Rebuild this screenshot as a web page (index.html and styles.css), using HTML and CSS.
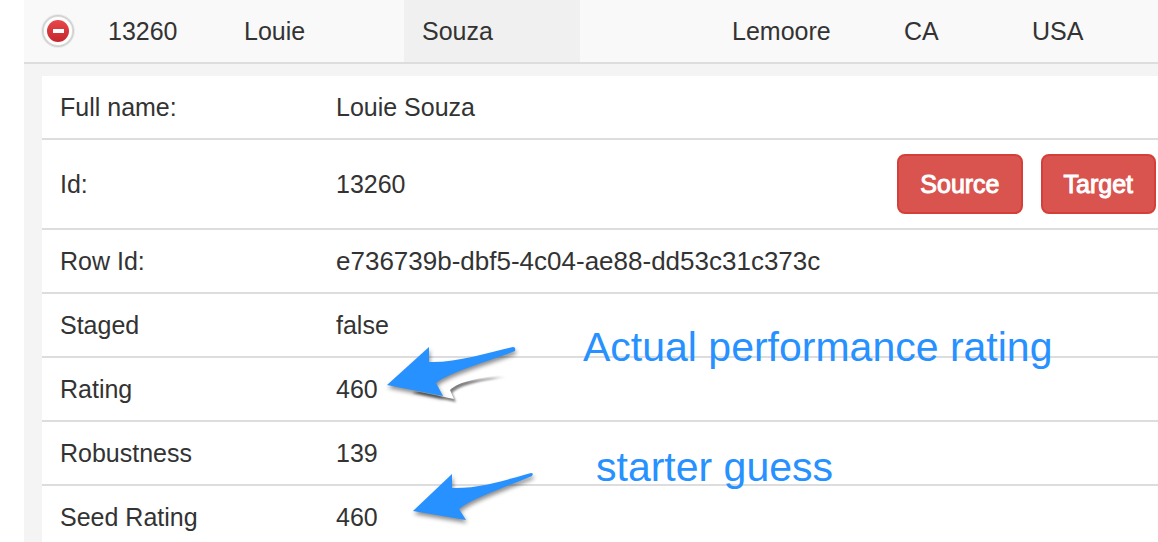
FILE: index.html
```html
<!DOCTYPE html>
<html lang="en">
<head>
    <meta charset="UTF-8">
    <meta name="viewport" content="width=device-width, initial-scale=1.0">
    <title>Player 13260</title>
    <link rel="stylesheet" href="styles.css">
</head>
<body>
    <main class="players">
        <!-- Expanded player row -->
        <table class="player-row">
            <tr>
                <td class="col-toggle">
                    <button class="toggle" aria-label="Hide details">
                        <svg width="36" height="36" viewBox="0 0 36 36">
                            <defs>
                                <linearGradient id="red" x1="0" y1="0" x2="0" y2="1">
                                    <stop offset="0" stop-color="#e8474b"/>
                                    <stop offset="1" stop-color="#c4262c"/>
                                </linearGradient>
                            </defs>
                            <circle cx="18" cy="18" r="17" fill="#ececec"/>
                            <circle cx="18" cy="18" r="16" fill="#cfcfcf"/>
                            <circle cx="18" cy="18" r="15" fill="#dcdcdc"/>
                            <circle cx="18" cy="18" r="14" fill="#fff"/>
                            <circle cx="18" cy="18" r="11" fill="url(#red)"/>
                            <rect x="13" y="16" width="11" height="4" fill="#fff"/>
                        </svg>
                    </button>
                </td>
                <td class="col-id">13260</td>
                <td class="col-first">Louie</td>
                <td class="col-last sorted">Souza</td>
                <td class="col-club"></td>
                <td class="col-city">Lemoore</td>
                <td class="col-state">CA</td>
                <td>USA</td>
            </tr>
        </table>

        <!-- Player details -->
        <div class="details">
            <table class="details-table">
                <tr>
                    <th scope="row">Full name:</th>
                    <td colspan="2">Louie Souza</td>
                </tr>
                <tr class="id-row">
                    <th scope="row">Id:</th>
                    <td>13260</td>
                    <td class="actions-cell">
                        <div class="actions">
                            <button class="btn-danger">Source</button>
                            <button class="btn-danger">Target</button>
                        </div>
                    </td>
                </tr>
                <tr>
                    <th scope="row">Row Id:</th>
                    <td class="row-id" colspan="2">e736739b-dbf5-4c04-ae88-dd53c31c373c</td>
                </tr>
                <tr>
                    <th scope="row">Staged</th>
                    <td colspan="2">false</td>
                </tr>
                <tr>
                    <th scope="row">Rating</th>
                    <td colspan="2">460</td>
                </tr>
                <tr>
                    <th scope="row">Robustness</th>
                    <td colspan="2">139</td>
                </tr>
                <tr>
                    <th scope="row">Seed Rating</th>
                    <td colspan="2">460</td>
                </tr>
            </table>
        </div>

        <!-- Notes drawn over the table -->
        <svg class="arrow arrow-rating" width="150" height="80" viewBox="0 0 150 80">
            <path class="arrow-ghost" d="M30 50 L74 59 L70 50 C78 42 100 37 124 34 C104 35 80 38 62 42 Z"/>
            <path class="arrow-shape" d="M7 45 L49 7 L49 22 C75 23 107 13 133 7 Q136 7 135 11 C110 21 72 31 56 43 L63 56 Z"/>
        </svg>
        <p class="note note-rating">Actual performance rating</p>

        <svg class="arrow arrow-seed" width="150" height="80" viewBox="0 0 150 80">
            <path class="arrow-shape" d="M7 45 L46 8 L46 22 C73 23 103 13 125 7 Q128 7 126 10 C100 21 68 31 53 43 L60 54 Z"/>
        </svg>
        <p class="note note-seed">starter guess</p>
    </main>
</body>
</html>
```
FILE: styles.css
```css
body {
    margin: 0;
    font-family: "Liberation Sans", Arial, sans-serif;
    font-size: 25px;
    line-height: 36px;
    color: #333;
    background-color: #fff;
}

.players {
    position: relative;
    margin-left: 24px;
}

table {
    width: 100%;
    border-collapse: separate;
    border-spacing: 0;
    table-layout: fixed;
}

td, th {
    box-sizing: border-box;
    padding: 13px 18px;
    font-weight: normal;
    text-align: left;
    vertical-align: middle;
}

/* Player row */
.player-row td {
    background-color: #f9f9f9;
    border-bottom: 2px solid #ddd;
}

.player-row .sorted { background-color: #f0f0f0; }

.player-row .col-toggle {
    width: 66px;
    padding: 0 16px;
}

.col-id { width: 136px; }
.col-first { width: 178px; }
.col-last { width: 176px; }
.col-club { width: 134px; }
.col-city { width: 172px; }
.col-state { width: 128px; }

.toggle {
    display: block;
    padding: 0;
    border: none;
    background: none;
    cursor: pointer;
}

.toggle svg { display: block; }

/* Details */
.details {
    padding: 12px 0 0 18px;
    background-color: #f4f4f4;
}

.details-table { background-color: #fff; }

.details-table th { width: 276px; }

.details-table tr + tr th,
.details-table tr + tr td { border-top: 2px solid #ddd; }

.details-table .row-id { font-size: 26px; }

.details-table .actions-cell { padding: 14px 2px 14px 0; }

.actions {
    display: flex;
    justify-content: flex-end;
    gap: 18px;
}

.btn-danger {
    padding: 10px 21px;
    border: 2px solid #d43f3a;
    border-radius: 8px;
    background-color: #d9534f;
    color: #fff;
    font: inherit;
    -webkit-text-stroke: 1px #fff;
    cursor: pointer;
}

/* Notes */
.note {
    position: absolute;
    margin: 0;
    font-size: 41px;
    line-height: 48px;
    color: #2691ff;
    white-space: nowrap;
}

.note-rating { top: 323px; left: 559px; }
.note-seed { top: 443px; left: 572px; }

.arrow { position: absolute; }
.arrow-rating { top: 340px; left: 356px; }
.arrow-seed { top: 466px; left: 382px; }

.arrow-shape {
    fill: #2691ff;
    filter: drop-shadow(1px 3px 2px rgba(0, 0, 0, 0.45));
}

.arrow-ghost {
    fill: #fff;
    filter: drop-shadow(2px 3px 1px rgba(0, 0, 0, 0.5));
}
```
